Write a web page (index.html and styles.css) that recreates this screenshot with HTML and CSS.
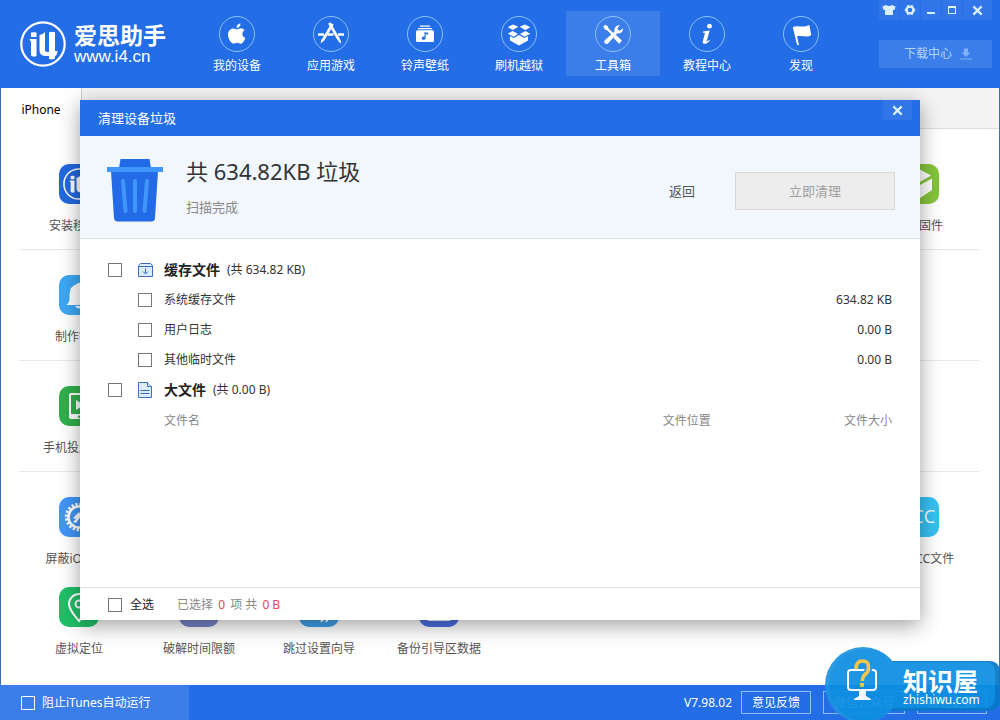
FILE: index.html
```html
<!DOCTYPE html>
<html lang="zh-CN">
<head>
<meta charset="utf-8">
<meta name="viewport" content="width=device-width, initial-scale=1">
<title>爱思助手</title>
<link rel="stylesheet" href="styles.css">
</head>
<body>
<svg class="defs" aria-hidden="true">
  <symbol id="mark" viewBox="0 0 46 46">
    <circle cx="23" cy="23" r="21.7" fill="none" stroke="currentColor" stroke-width="2.2"/>
    <path fill="currentColor" d="M11 11.500q3-.5 5.500 0v4.500h-5.500zM9.500 18h7v17q-3 1.500-5.500-.5V20.500q-1-.5-1.500-2.500zM19.500 14q3 0 5.500-3v18q0 2 2 2h2V11.500q3-1.500 6-.2V30h2.500q-.5 5-2.500 5v2.500q-3.500 1.500-6 .5V35h-3q-6.500 0-6.500-6z"/>
  </symbol>
  <symbol id="cross" viewBox="0 0 12 12">
    <path d="M1.500 1.500l9 9M10.500 1.500l-9 9" stroke="currentColor" stroke-width="2.400" fill="none"/>
  </symbol>
</svg>

<div class="app">
  <header class="header">
    <a class="brand" href="#">
      <svg class="brand-mark"><use href="#mark"/></svg>
      <span class="brand-text">
        <span class="brand-name">爱思助手</span>
        <span class="brand-url">www.i4.cn</span>
      </span>
    </a>

    <nav class="nav">
      <a class="nav-item" href="#">
        <svg class="nav-icon" viewBox="0 0 36 36"><circle class="ring" cx="18" cy="18" r="17.500"/><path d="M21.500 7.500c.2 2.500-1.700 4.500-3.900 4.400-.2-2.300 1.800-4.300 3.900-4.400zM17.800 13.400c1 0 2.200-1.100 4-1.100 1.500 0 2.900.8 3.700 2-3.200 2-2.600 6.300.8 7.600-.8 2.300-2.600 5.800-4.500 5.800-1.500 0-2-.9-3.700-.9s-2.300.9-3.700.9c-2.500 0-5.400-5.500-5.400-9.100 0-3.900 2.700-6.200 5.200-6.200 1.500 0 2.700 1 3.600 1z"/></svg>
        <span>我的设备</span>
      </a>
      <a class="nav-item" href="#">
        <svg class="nav-icon" viewBox="0 0 36 36"><circle class="ring" cx="18" cy="18" r="17.500"/><g fill="none" stroke="#fff"><path d="M16.300 7l9.700 17" stroke-width="2.600"/><path d="M19.500 8L10 24" stroke-width="2.600"/><path d="M5 18.500h6M14.500 18.500h6M25 18.500h6" stroke-width="2.400"/></g><path d="M8.500 23l2.600 1.600-3.500 2.800zM24.900 25l2.600-1.500.7 4.200z"/></svg>
        <span>应用游戏</span>
      </a>
      <a class="nav-item" href="#">
        <svg class="nav-icon" viewBox="0 0 36 36"><circle class="ring" cx="18" cy="18" r="17.500"/><path d="M13 9.500h10v1.300H13zM11 12h14v1.300H11z"/><path fill-rule="evenodd" d="M10.500 14.300h15q1.500 0 1.500 1.500v8.700q0 1.500-1.500 1.500h-15Q9 26 9 24.500v-8.700q0-1.500 1.500-1.500zM17.500 16v4.600c-1.600-.3-2.700.6-2.700 1.700 0 2.200 3.800 2 3.800-.4V18l2.600.7V17z"/></svg>
        <span>铃声壁纸</span>
      </a>
      <a class="nav-item" href="#">
        <svg class="nav-icon" viewBox="0 0 36 36"><circle class="ring" cx="18" cy="18" r="17.500"/><path d="M12 8.500l5.300 2.200-5.600 3.300-5-2.800zM24 8.500l-5.300 2.200 5.600 3.300 5-2.800zM11.700 15l5.300 3-4.400 2.700-5.900-3zM24.300 15L19 18l4.400 2.700 5.900-3zM9 20.300l3.900 1.700 5.100-3 5.100 3 3.900-1.700v4.200L18 29.500l-9-5z"/></svg>
        <span>刷机越狱</span>
      </a>
      <a class="nav-item nav-item-active" href="#" aria-current="page">
        <svg class="nav-icon" viewBox="0 0 36 36"><circle class="ring" cx="18" cy="18" r="17.500"/><path d="M8.300 10.400l2-1.700 2.700 1.800.6 2 5.200 5-1.500 1.700-5.300-5-2.200-.8zM19.700 19.500l1.600-.3 5.600 5.300-2.700 3.300-5.700-5.900zM27.800 12.200c.8 3-1.900 5.900-5.500 5.100L13 27.400c-2.300 1.700-4.900-1.100-3.200-3.200l9.800-8.600c-.9-3.500 1.800-7 5.500-6.300l-3 3.300 2.500 2.500z"/></svg>
        <span>工具箱</span>
      </a>
      <a class="nav-item" href="#">
        <svg class="nav-icon" viewBox="0 0 36 36"><circle class="ring" cx="18" cy="18" r="17.500"/><circle cx="20.500" cy="10.200" r="2.400"/><path d="M14 15.500l6.700-1-3 10.300c-.2 1 .8.600 2.500-1l.6.600c-2.800 4.200-8 4.500-7 .8l2.200-8.200-2.200-.5z"/></svg>
        <span>教程中心</span>
      </a>
      <a class="nav-item" href="#">
        <svg class="nav-icon" viewBox="0 0 36 36"><circle class="ring" cx="18" cy="18" r="17.500"/><path d="M9.800 11.300c5-2.800 9 1.200 16.500-2.300l2 10.300c-5.300 3-9.300-.5-14.300 1.200l2 8.500h-1.900z"/></svg>
        <span>发现</span>
      </a>
    </nav>

    <div class="header-side">
      <div class="window-buttons">
        <button type="button" aria-label="皮肤"><svg width="14" height="12" viewBox="0 0 14 12"><path d="M4 1q3 2 6 0l3.500 1.500L12.600 6l-1.600-.3V11H3V5.700L1.400 6 .5 2.500z"/></svg></button>
        <button type="button" aria-label="设置"><svg width="12" height="12" viewBox="0 0 12 12"><path fill-rule="evenodd" d="M3.600.8l2.400.9 2.400-.9 1.200 2.400 1.900 2.800-1.900 2.800-1.200 2.400-2.400-.9-2.400.9-1.200-2.400L.5 6l1.900-2.800zM6 3.700a2.300 2.300 0 100 4.600 2.300 2.300 0 000-4.600z"/></svg></button>
        <button type="button" aria-label="最小化"><svg width="10" height="12" viewBox="0 0 10 12"><path d="M1 8h8v2H1z"/></svg></button>
        <button type="button" aria-label="最大化"><svg width="10" height="10" viewBox="0 0 10 10"><path fill-rule="evenodd" d="M1 1h8v8H1zM2 3v5h6V3z"/></svg></button>
        <button class="wide" type="button" aria-label="关闭"><svg width="11" height="11"><use href="#cross"/></svg></button>
      </div>
      <button class="download" type="button">下载中心
        <svg width="12" height="12" viewBox="0 0 12 12"><path d="M4 .5h4v4h2.500L6 9 1.500 4.500H4zM0 10.500h12v1H0z"/></svg>
      </button>
    </div>
  </header>

  <main class="content">
    <div class="tabs"><button class="tab" type="button">iPhone</button></div>
    <div class="tools">
      <div class="tool-group">
        <a class="tool" href="#"><svg class="tool-icon c-blue" viewBox="0 0 40 40"><svg x="4" y="4" width="32" height="32"><use href="#mark"/></svg></svg><span>安装移动端</span></a>
        <a class="tool tool-last" href="#"><svg class="tool-icon c-lime" viewBox="0 0 40 40"><path d="M20 5l12 6.500-12 7-12-7zM21 21l12-6.500v11.500l-12 8zM19 21L7 14.500v11.500l12 8z"/></svg><span>下载固件</span></a>
      </div>
      <div class="tool-group">
        <a class="tool" href="#"><svg class="tool-icon c-sky" viewBox="0 0 40 40"><path d="M18 9q2-2.500 4 0 7 2 7.500 10v6q.5 2.500 3 5h-25q2.500-2.500 3-5v-6Q11 11 18 9zM16 31h8q-4 5-8 0z"/></svg><span>制作铃声</span></a>
      </div>
      <div class="tool-group">
        <a class="tool" href="#"><svg class="tool-icon c-green" viewBox="0 0 40 40"><path fill-rule="evenodd" d="M12 7h16q2 0 2 2v22q0 2-2 2H12q-2 0-2-2V9q0-2 2-2zM12 9v19h16V9zM20 29.500a1.200 1.200 0 100 2.400 1.200 1.200 0 000-2.400z"/><path d="M17 14l8 5-8 5z"/></svg><span>手机投屏直播</span></a>
      </div>
      <div class="tool-group">
        <a class="tool" href="#"><svg class="tool-icon c-azure" viewBox="0 0 40 40"><circle cx="20" cy="20" r="12.500" fill="none" stroke="#fff" stroke-width="3.500" stroke-dasharray="2.200 1.727"/><circle cx="20" cy="20" r="10.500" fill="none" stroke="#fff" stroke-width="2.500"/><path d="M20 15l2 4-5 7-3-1 3-3-3-1z"/></svg><span>屏蔽iOS更新</span></a>
        <a class="tool tool-last" href="#"><svg class="tool-icon c-cyan" viewBox="0 0 40 40"><text x="36" y="26" text-anchor="end">CC</text></svg><span>制作ACC文件</span></a>
        <a class="tool" href="#"><svg class="tool-icon c-emerald" viewBox="0 0 40 40"><path fill="none" stroke="#fff" stroke-width="2" d="M20 34C14 27 10 22 10 17a10 10 0 0120 0c0 5-4 10-10 17z"/><circle cx="20" cy="17" r="3.500" fill="none" stroke="#fff" stroke-width="2"/></svg><span>虚拟定位</span></a>
        <a class="tool" href="#"><svg class="tool-icon c-slate" viewBox="0 0 40 40"><circle cx="20" cy="19" r="11"/></svg><span>破解时间限额</span></a>
        <a class="tool" href="#"><svg class="tool-icon c-ocean" viewBox="0 0 40 40"><path fill="none" stroke="#fff" stroke-width="2" d="M21 28l3 4-2 3M26 28l3 4-2 3"/></svg><span>跳过设置向导</span></a>
        <a class="tool" href="#"><svg class="tool-icon c-royal" viewBox="0 0 40 40"><rect x="8" y="10" width="24" height="24" rx="2"/></svg><span>备份引导区数据</span></a>
      </div>
    </div>
  </main>

  <footer class="footer">
    <label class="itunes"><input class="check check-light" type="checkbox">阻止iTunes自动运行</label>
    <div class="footer-side">
      <span>V7.98.02</span>
      <button type="button">意见反馈</button>
      <button class="long" type="button">微信公众号</button>
      <button type="button">检查更新</button>
    </div>
  </footer>
</div>

<div class="overlay">
  <section class="dialog" role="dialog" aria-labelledby="dialog-title">
    <header class="dialog-bar">
      <h1 id="dialog-title">清理设备垃圾</h1>
      <button class="dialog-close" type="button" aria-label="关闭"><svg width="11" height="11"><use href="#cross"/></svg></button>
    </header>

    <div class="summary">
      <svg class="trash" viewBox="0 0 56 64">
        <path fill="#226ae6" d="M13.500 0h29l1.500 9H12zM4 12h47l-3 47q-.3 3.500-3.500 3.500h-34q-3 0-3.500-3.500z"/>
        <path fill="#3f96ff" d="M0 8h56v5H0z"/>
        <path d="M16 22l2.500 30M28 22v30M40 22l-2.500 30" stroke="#3f96ff" stroke-width="4" stroke-linecap="round"/>
      </svg>
      <div class="summary-text">
        <h2>共 634.82KB 垃圾</h2>
        <p>扫描完成</p>
      </div>
      <button class="back" type="button">返回</button>
      <button class="clean" type="button" disabled>立即清理</button>
    </div>

    <div class="list">
      <label class="row group">
        <input class="check" type="checkbox">
        <svg class="row-icon" viewBox="0 0 16 16"><path d="M2.500 1.500h10l2 2v11H.500v-11z"/><path d="M.500 4.500h14M7.500 6.500v5M5 9.500l2.500 2.500L10 9.500"/></svg>
        <strong>缓存文件</strong><span>(共 634.82 KB)</span>
      </label>
      <label class="row item"><input class="check" type="checkbox">系统缓存文件<span class="size">634.82 KB</span></label>
      <label class="row item"><input class="check" type="checkbox">用户日志<span class="size">0.00 B</span></label>
      <label class="row item"><input class="check" type="checkbox">其他临时文件<span class="size">0.00 B</span></label>
      <label class="row group">
        <input class="check" type="checkbox">
        <svg class="row-icon" viewBox="0 0 16 16"><path d="M.500.500h9l4 4v11H.500z"/><path d="M9.500.500v4h4M2.500 8.500h9M2.500 11.500h9"/></svg>
        <strong>大文件</strong><span>(共 0.00 B)</span>
      </label>
      <div class="files">
        <table>
          <thead><tr><th class="file-name">文件名</th><th>文件位置</th><th class="file-size">文件大小</th></tr></thead>
        </table>
      </div>
    </div>

    <footer class="dialog-foot">
      <label class="select-all"><input class="check" type="checkbox">全选</label>
      <span class="selected">已选择 <em>0</em> 项 共 <em>0 B</em></span>
    </footer>
  </section>
</div>

<div class="badge">
  <svg class="badge-shape" viewBox="0 0 175 76">
    <path fill="#0879c8" d="M66 14h98q11 0 11 12v26q0 12-13 12H66z"/>
    <circle cx="38" cy="38" r="38" fill="#1f93e0"/>
    <path fill="#0d8fe2" d="M68 15h91q11 0 11 11v24q0 11-11 11H68z"/>
    <circle cx="40" cy="38" r="36" fill="#0d8fe2"/>
    <rect x="23" y="23" width="28" height="20" rx="3" fill="none" stroke="#fff" stroke-width="2"/>
    <path fill="#fff" d="M34 44h7v5l5 3v1H29v-1l5-3z"/>
    <path fill="none" stroke="#0d8fe2" stroke-width="7" d="M31 21q0-7 6.500-7t6 7q0 4-3 6-3 2-3 7"/>
    <path fill="none" stroke="#f8c23c" stroke-width="3.600" d="M31 22q0-8 6.500-8t6 7q0 4-3 6-3 2-3 7"/>
    <rect x="35" y="36" width="4" height="4" fill="#f8c23c"/>
  </svg>
  <div class="badge-text"><strong>知识屋</strong><span>zhishiwu.com</span></div>
</div>
</body>
</html>
```

FILE: styles.css
```css
* { box-sizing: border-box; }

body {
  margin: 0;
  font: 12px/20px "Noto Sans", "Noto Sans CJK SC", sans-serif;
  color: #333;
}

button, input { font: inherit; margin: 0; }
button { border: 0; padding: 0; background: none; color: inherit; cursor: pointer; }
a { color: inherit; text-decoration: none; }
h1, h2, p { margin: 0; font-weight: 400; }
.defs { display: none; }

.app {
  display: flex;
  flex-direction: column;
  min-height: 100vh;
}

/* Header */
.header {
  display: flex;
  align-items: flex-start;
  min-height: 88px;
  padding-right: 8px;
  background: #236de6;
  color: #fff;
}

.brand {
  display: flex;
  gap: 8px;
  width: 190px;
  padding: 21px 0 0 20px;
}
.brand-mark { width: 46px; height: 46px; }
.brand-text { display: flex; flex-direction: column; white-space: nowrap; }
.brand-name { font-size: 23px; font-weight: 700; line-height: 28px; }
.brand-url { font-family: "Liberation Sans", sans-serif; font-size: 17px; line-height: 16px; }

.nav { display: flex; flex: 1; padding-top: 11px; }
.nav-item {
  display: flex;
  flex-direction: column;
  align-items: center;
  gap: 4px;
  width: 94px;
  height: 65px;
  padding-top: 5px;
}
.nav-item-active { background: #3b7de9; }
.nav-icon { width: 36px; height: 36px; fill: #fff; }
.nav-icon .ring { fill: none; stroke: #8fc0fa; }

.header-side { display: flex; flex-direction: column; gap: 20px; width: 113px; }
.window-buttons { display: flex; gap: 1px; }
.window-buttons button, .dialog-close {
  display: flex;
  align-items: center;
  justify-content: center;
  flex: 1;
  height: 20px;
  background: #3175e8;
  color: #d8f0ff;
  fill: #d8f0ff;
}
.window-buttons .wide { flex: 0 0 29px; }
.download {
  display: flex;
  align-items: center;
  justify-content: center;
  gap: 8px;
  height: 28px;
  padding-left: 5px;
  background: #3b7de9;
  color: #b5d3fa;
  fill: #82b2f5;
}

/* Page */
.content {
  flex: 1;
  border: solid #3e70b8;
  border-width: 0 1px;
  background: #fff;
}
.tabs { display: flex; height: 41px; border-bottom: 1px solid #ddd; background: #f4f4f4; }
.tab {
  width: 81px;
  height: 41px;
  padding-top: 2px;
  border-right: 1px solid #ccc;
  background: #fff;
  color: #000;
}

.tools { padding: 10px 20px 0 18px; }
.tool-group {
  display: grid;
  grid-template-columns: repeat(8, 1fr);
  row-gap: 18px;
  padding: 25px 0 13px;
  border-bottom: 1px solid #e8e8e8;
}
.tool-group:last-child { border-bottom: 0; }
.tool {
  display: flex;
  flex-direction: column;
  align-items: center;
  gap: 12px;
  color: #555;
  white-space: nowrap;
}
.tool-last { grid-column: 8; }
.tool-icon { width: 40px; height: 40px; border-radius: 10px; fill: #fff; color: #fff; }
.tool-icon text { font: 18px "Open Sans", sans-serif; }
.c-blue { background: #226ae0; }
.c-lime { background: #84c43c; }
.c-sky { background: #3da8f5; }
.c-green { background: #30b04c; }
.c-azure { background: #4196f8; }
.c-cyan { background: #36c2f2; }
.c-emerald { background: #1fc168; }
.c-slate { background: #7585c8; }
.c-ocean { background: #3ea2ee; }
.c-royal { background: #4a70e4; }

/* Status bar */
.footer {
  display: flex;
  justify-content: space-between;
  height: 35px;
  background: #236de6;
  color: #fff;
}
.itunes {
  display: flex;
  align-items: center;
  gap: 7px;
  width: 189px;
  padding-left: 21px;
  background: #3b7de9;
}
.footer-side { display: flex; align-items: center; gap: 12px; padding-right: 13px; }
.footer-side span { margin-right: -3px; }
.footer-side button { width: 70px; height: 23px; border: 1px solid #8fbcf8; }
.footer-side .long { width: 82px; }

.check {
  flex: none;
  width: 14px;
  height: 14px;
  appearance: none;
  border: 1px solid #777;
  background: #fff;
}
.check-light { border-color: #fff; background: none; }

/* Dialog */
.overlay { position: absolute; inset: 0; display: flex; padding: 100px 80px; }
.dialog {
  display: flex;
  flex: 1;
  flex-direction: column;
  background: #fff;
  box-shadow: 0 5px 20px rgba(0, 0, 0, 0.38);
}
.dialog-bar {
  display: flex;
  align-items: flex-start;
  justify-content: space-between;
  padding: 0 8px 0 18px;
  background: #236de6;
  color: #fff;
}
.dialog-bar h1 { font-size: 13px; line-height: 36px; }
.dialog-close { flex: 0 0 29px; }

.summary {
  display: flex;
  align-items: center;
  padding: 20px 25px 13px 27px;
  border-bottom: 1px solid #e1e6ee;
  background: #f2f6fd;
}
.trash { width: 56px; height: 64px; fill: none; }
.summary-text { flex: 1; padding: 0 0 8px 23px; }
.summary-text h2 { font-size: 22px; line-height: 30px; }
.summary-text p { margin-top: 11px; font-size: 13px; color: #888; }
.back { margin-right: 40px; font-size: 13px; color: #555; }
.clean {
  width: 160px;
  height: 38px;
  border: 1px solid #d8d8d8;
  background: #ededed;
  color: #a0a0a0;
  font-size: 13px;
}

.list { flex: 1; padding: 16px 28px; }
.row { display: flex; align-items: center; height: 30px; color: #333; }
.group .check { margin-right: 16px; }
.row-icon { width: 16px; height: 16px; margin-right: 10px; fill: #dcecff; stroke: #3d6dbb; }
.row strong { margin-right: 7px; font-size: 14px; color: #222; }
.item { padding-left: 30px; }
.item .check { margin-right: 12px; }
.size { margin-left: auto; }
.files { padding-left: 56px; }
.files table { width: 100%; border-collapse: collapse; table-layout: fixed; }
.files th { padding: 6px 0 4px; font-weight: 400; text-align: left; color: #888; }
.files .file-name { width: 68.5%; }
.files .file-size { text-align: right; }

.dialog-foot {
  display: flex;
  align-items: center;
  gap: 23px;
  height: 33px;
  padding: 1px 28px 0;
  border-top: 1px solid #e4e4e4;
}
.select-all { display: flex; align-items: center; gap: 8px; color: #222; }
.selected { color: #888; }
.selected em { margin: 0 2px; font-style: normal; color: #e8474c; }

/* Corner badge */
.badge {
  position: absolute;
  right: 0;
  bottom: -3px;
  width: 175px;
  height: 76px;
  overflow: hidden;
  color: #fff;
  pointer-events: none;
}
.badge-shape { display: block; width: 175px; height: 76px; opacity: 0.93; }
.badge-text {
  position: absolute;
  top: 22px;
  left: 78px;
  display: flex;
  flex-direction: column;
  white-space: nowrap;
}
.badge-text strong { font-size: 25px; line-height: 24px; }
.badge-text span { font-size: 12px; line-height: 14px; }
```
